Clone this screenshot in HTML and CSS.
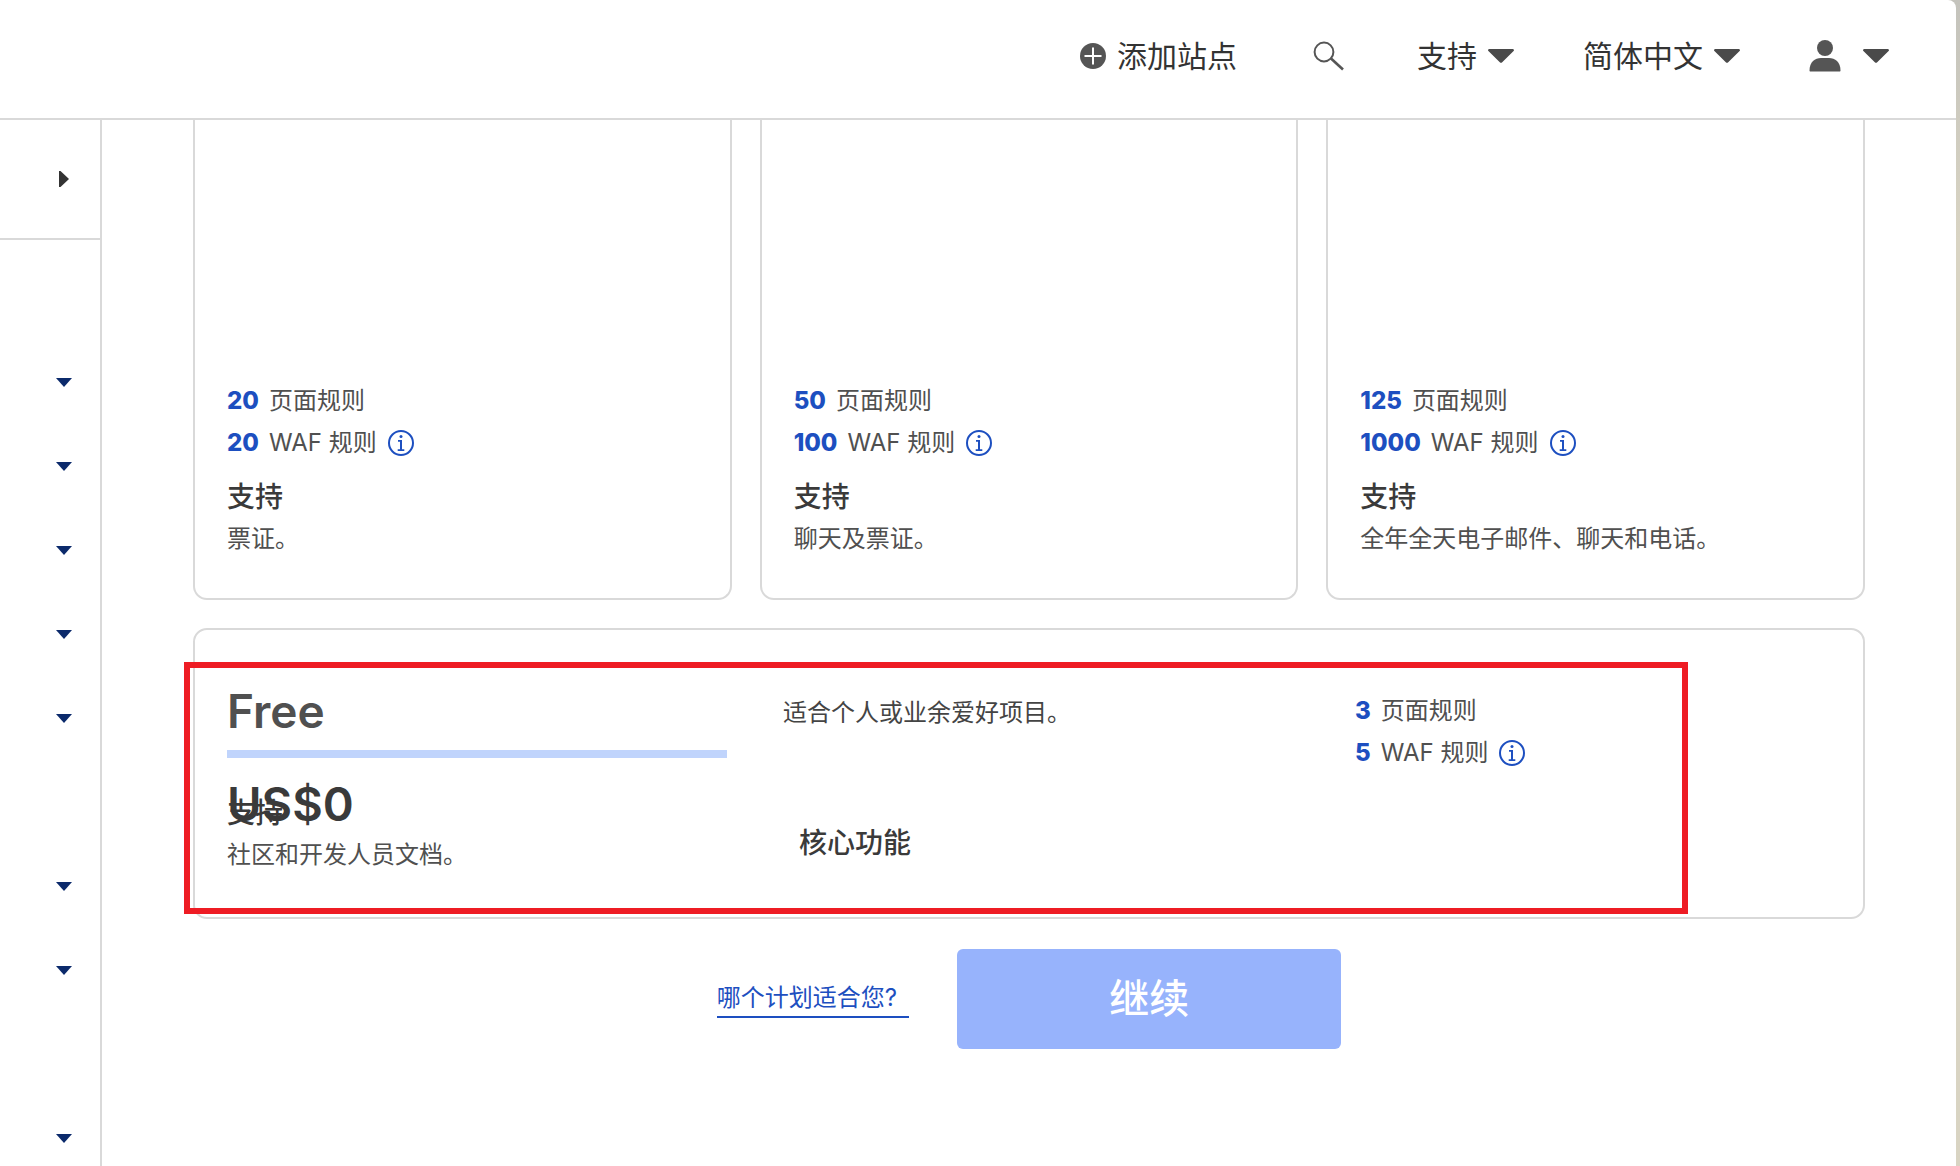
FILE: index.html
```html
<!DOCTYPE html>
<html lang="zh-CN">
<head>
<meta charset="utf-8">
<meta name="viewport" content="width=device-width, initial-scale=1">
<title>计划</title>
<link rel="stylesheet" href="styles.css">
</head>
<body>
<svg class="defs" aria-hidden="true">
  <symbol id="caret" viewBox="0 0 26 14"><path d="M1.4 0h23.2c1.2 0 1.8 1.3 1 2.1L14.2 13.2a1.7 1.7 0 0 1-2.4 0L.4 2.1C-.4 1.3.2 0 1.4 0z"/></symbol>
  <symbol id="caret-small" viewBox="0 0 16 9"><path d="M0 0h16L8 9z"/></symbol>
  <symbol id="info" viewBox="0 0 26 26"><circle cx="13" cy="13" r="12" fill="none" stroke="currentColor" stroke-width="2"/><circle cx="13" cy="6.4" r="1.5"/><path d="M10 10h4v9.200h2.300V21H9.700v-1.800H12v-7.400h-2z"/></symbol>
</svg>
<div class="window">
  <header class="topbar">
    <button class="item"><svg class="icon-plus" viewBox="0 0 26 26"><circle cx="13" cy="13" r="13"/><path d="M13 4.500v17M4.500 13h17" stroke="#fff" stroke-width="2"/></svg>添加站点</button>
    <button class="item" aria-label="搜索"><svg class="icon-search" viewBox="0 0 42 30"><circle cx="18" cy="11" r="9.400"/><path d="M25 17.500L37 28.500" stroke-width="2.600"/></svg></button>
    <button class="item">支持<svg class="caret"><use href="#caret"/></svg></button>
    <button class="item">简体中文<svg class="caret"><use href="#caret"/></svg></button>
    <button class="item item-account" aria-label="账户"><svg class="icon-user" viewBox="0 0 32 32"><circle cx="16" cy="8" r="8"/><path d="M0.500 30.500C0.500 22 6 18 12 18h8c6 0 11.500 4 11.500 12.500 0 .7-.3 1-1 1h-29c-.7 0-1-.3-1-1z"/></svg><svg class="caret"><use href="#caret"/></svg></button>
  </header>
  <div class="body">
    <nav class="sidebar" aria-label="导航">
      <button class="expand" aria-label="展开"><svg viewBox="0 0 10 16"><path d="M0 0h1.500L10 8l-8.500 8H0z"/></svg></button>
      <ul class="menu">
        <li><button aria-label="菜单 1"><svg><use href="#caret-small"/></svg></button></li>
        <li><button aria-label="菜单 2"><svg><use href="#caret-small"/></svg></button></li>
        <li><button aria-label="菜单 3"><svg><use href="#caret-small"/></svg></button></li>
        <li><button aria-label="菜单 4"><svg><use href="#caret-small"/></svg></button></li>
        <li><button aria-label="菜单 5"><svg><use href="#caret-small"/></svg></button></li>
        <li></li>
        <li><button aria-label="菜单 7"><svg><use href="#caret-small"/></svg></button></li>
        <li><button aria-label="菜单 8"><svg><use href="#caret-small"/></svg></button></li>
        <li></li>
        <li><button aria-label="菜单 10"><svg><use href="#caret-small"/></svg></button></li>
      </ul>
    </nav>
    <main class="content">
      <div class="plans">
        <section class="card plan">
          <p class="rule"><b>20</b>页面规则</p>
          <p class="rule"><b>20</b>WAF 规则<button class="info" aria-label="信息"><svg><use href="#info"/></svg></button></p>
          <h3 class="title">支持</h3>
          <p class="text">票证。</p>
        </section>
        <section class="card plan">
          <p class="rule"><b>50</b>页面规则</p>
          <p class="rule"><b>100</b>WAF 规则<button class="info" aria-label="信息"><svg><use href="#info"/></svg></button></p>
          <h3 class="title">支持</h3>
          <p class="text">聊天及票证。</p>
        </section>
        <section class="card plan">
          <p class="rule"><b>125</b>页面规则</p>
          <p class="rule"><b>1000</b>WAF 规则<button class="info" aria-label="信息"><svg><use href="#info"/></svg></button></p>
          <h3 class="title">支持</h3>
          <p class="text">全年全天电子邮件、聊天和电话。</p>
        </section>
      </div>
      <section class="card free">
        <div>
          <h2 class="name">Free</h2>
          <p class="price">US$0</p>
          <h3 class="title">支持</h3>
          <p class="text">社区和开发人员文档。</p>
        </div>
        <div>
          <p class="text summary">适合个人或业余爱好项目。</p>
          <h3 class="title core">核心功能</h3>
        </div>
        <div>
          <p class="rule"><b>3</b>页面规则</p>
          <p class="rule"><b>5</b>WAF 规则<button class="info" aria-label="信息"><svg><use href="#info"/></svg></button></p>
        </div>
        <div class="highlight"></div>
      </section>
      <div class="actions">
        <a class="help" href="#">哪个计划适合您?</a>
        <button class="continue">继续</button>
      </div>
    </main>
  </div>
</div>
</body>
</html>
```

FILE: styles.css
```css
* { box-sizing: border-box; }

body {
  margin: 0;
  padding-right: 4px;
  background: linear-gradient(#c4c3bc, #d9d4c3 240px);
  font-family: Inter, "Noto Sans CJK SC", sans-serif;
  font-size: 24px;
  line-height: 42px;
  color: #505050;
}

h2, h3, p, ul { margin: 0; padding: 0; }

button {
  padding: 0;
  border: 0;
  background: none;
  font: inherit;
  color: inherit;
  cursor: pointer;
}

svg { display: block; fill: currentColor; }

.defs { position: absolute; width: 0; height: 0; }

.window {
  display: flex;
  flex-direction: column;
  height: 100vh;
  overflow: hidden;
  background: #fff;
  border-top-right-radius: 8px;
}

/* Top bar */
.topbar {
  display: flex;
  flex: none;
  justify-content: flex-end;
  gap: 69px;
  padding: 32px 67px 38px 32px;
  border-bottom: 2px solid #d9d9d9;
}

.item {
  display: flex;
  align-items: center;
  gap: 11px;
  height: 48px;
  font-size: 30px;
  color: #333;
}

.item svg { color: #555; }
.item .caret { width: 26px; height: 14px; color: #4a4a4a; }
.icon-plus { width: 26px; height: 26px; }
.icon-search { width: 42px; height: 30px; fill: none; stroke: currentColor; stroke-width: 2; }
.icon-user { width: 32px; height: 32px; }
.item-account { gap: 22px; }

/* Sidebar */
.body { display: flex; flex: 1; min-height: 0; }

.sidebar {
  flex: none;
  width: 102px;
  overflow: hidden;
  border-right: 2px solid #d9d9d9;
}

.expand {
  display: flex;
  align-items: center;
  justify-content: flex-end;
  width: 100%;
  height: 120px;
  padding-right: 31px;
  border-bottom: 2px solid #d9d9d9;
  color: #333;
}

.expand svg { width: 10px; height: 16px; }

.menu { padding: 100px 28px 0 0; list-style: none; }

.menu li {
  display: flex;
  align-items: center;
  justify-content: flex-end;
  height: 84px;
}

.menu svg { width: 16px; height: 9px; color: #0b2a6b; }

/* Plans */
.content {
  flex: 1;
  min-width: 0;
  overflow: hidden;
  padding: 0 91px;
}

.plans {
  display: grid;
  grid-template-columns: repeat(3, 1fr);
  gap: 28px;
}

.card {
  border: 2px solid #d9d9d9;
  border-radius: 14px;
}

.plan {
  padding: 260px 32px 38px;
  border-top: 0;
  border-radius: 0 0 14px 14px;
}

.rule {
  display: flex;
  align-items: center;
}

.rule b {
  margin-right: 10px;
  font-weight: 800;
  color: #1d4fc0;
}

.info { margin-left: 11px; color: #1d4fc0; }
.info svg { width: 26px; height: 26px; }

.title {
  margin-top: 12px;
  font-size: 28px;
  font-weight: 500;
  color: #3a3a3a;
}

.free {
  position: relative;
  display: grid;
  grid-template-columns: 500fr 516fr 476fr;
  gap: 56px;
  margin-top: 28px;
  padding: 60px 32px 41px;
}

.name {
  padding-bottom: 18px;
  border-bottom: 8px solid #c0d4fc;
  font-size: 46px;
  font-weight: 600;
  line-height: 42px;
}

.price {
  margin-top: 16px;
  font-size: 47px;
  font-weight: 600;
  line-height: 60px;
  color: #3a3a3a;
}

.free .price + .title { margin-top: -42px; }
.free .core { margin-top: 88px; padding-left: 16px; }
.summary { padding-top: 2px; color: #444; }

.highlight {
  position: absolute;
  top: 32px;
  bottom: 3px;
  left: -11px;
  right: 175px;
  border: 6px solid #ee1c24;
  pointer-events: none;
}

/* Actions */
.actions {
  display: flex;
  align-items: center;
  justify-content: center;
  gap: 48px;
  margin-top: 30px;
}

.help {
  padding-right: 12px;
  border-bottom: 2px solid #1d4fc0;
  line-height: 36px;
  color: #1d4fc0;
  text-decoration: none;
}

.continue {
  width: 384px;
  height: 100px;
  border-radius: 6px;
  background: #97b3fc;
  font-size: 40px;
  font-weight: 500;
  color: #fff;
}
```
